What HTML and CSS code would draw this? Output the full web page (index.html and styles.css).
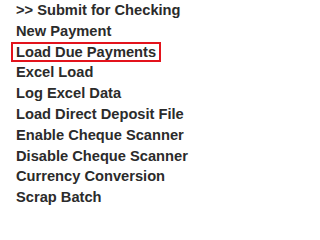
FILE: index.html
```html
<!DOCTYPE html>
<html>
<head>
<meta charset="utf-8">
<link rel="stylesheet" href="styles.css">
</head>
<body>
<ul class="menu">
  <li class="item">&gt;&gt; Submit for Checking</li>
  <li class="item">New Payment</li>
  <li class="item"><span class="selected">Load Due Payments</span></li>
  <li class="item">Excel Load</li>
  <li class="item">Log Excel Data</li>
  <li class="item">Load Direct Deposit File</li>
  <li class="item">Enable Cheque Scanner</li>
  <li class="item">Disable Cheque Scanner</li>
  <li class="item">Currency Conversion</li>
  <li class="item">Scrap Batch</li>
</ul>
</body>
</html>
```
FILE: styles.css
```css
html, body {
  margin: 0;
  padding: 0;
  background: #ffffff;
}
.menu {
  list-style: none;
  margin: 0;
  padding: 0 0 0 16px;
  font-family: "Liberation Sans", Arial, sans-serif;
  font-weight: bold;
  font-size: 11pt;
  color: #2b2b2b;
}
.item {
  padding: 2px 0;
  line-height: 16.8px;
  white-space: nowrap;
}
.selected {
  margin-left: -5px;
  padding: 0 3px;
  border: 2px solid #e3131c;
}
```
